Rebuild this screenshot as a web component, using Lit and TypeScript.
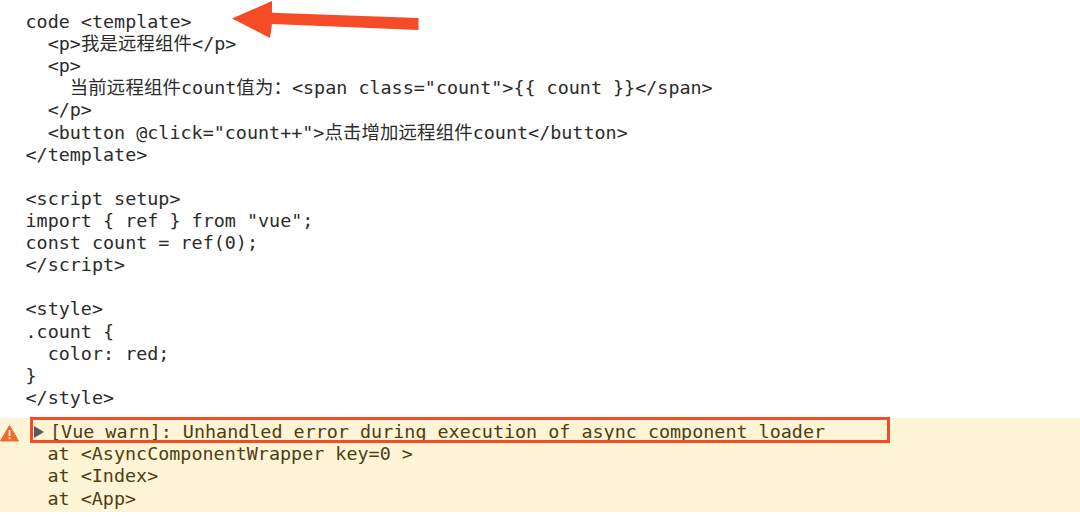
import { LitElement, html, css } from "lit";
import { customElement } from "lit/decorators.js";

const code = `code <template>
  <p>我是远程组件</p>
  <p>
    当前远程组件count值为：<span class="count">{{ count }}</span>
  </p>
  <button @click="count++">点击增加远程组件count</button>
</template>

<script setup>
import { ref } from "vue";
const count = ref(0);
</script>

<style>
.count {
  color: red;
}
</style>`;

const lines = code.split("\n").map((l) => l.split(/([\u4e00-\u9fff：]+)/));

@customElement("app-root")
export class AppRoot extends LitElement {
  static styles = css`
    :host {
      display: block;
      position: relative;
      width: 1080px;
      height: 518px;
      background: #fff;
      overflow: hidden;
      font-family: "DejaVu Sans Mono", "Noto Sans CJK SC", monospace;
      font-size: 18.4px;
      line-height: 22.12px;
      color: #2b2b2b;
    }
    .code {
      padding: 11px 0 0 25.5px;
      height: 418px;
      box-sizing: border-box;
    }
    .line {
      height: 22.12px;
      white-space: pre;
    }
    .cjk {
      letter-spacing: 0.14px;
    }
    .warn {
      position: relative;
      height: 94px;
      background: #fef4d6;
      color: #4e3d12;
      padding-top: 3px;
      box-sizing: border-box;
    }
    .row {
      display: flex;
      align-items: center;
      height: 22.2px;
      white-space: pre;
    }
    .first {
      padding-left: 34px;
      gap: 6px;
    }
    .at {
      padding-left: 47.5px;
    }
    .tri {
      width: 0;
      height: 0;
      border-left: 10px solid #5a5a5a;
      border-top: 6px solid transparent;
      border-bottom: 6px solid transparent;
    }
    .icon {
      position: absolute;
      left: 0;
      top: 6px;
    }
    .box {
      position: absolute;
      left: 30px;
      top: -1px;
      width: 860px;
      height: 26px;
      box-sizing: border-box;
      border: 3px solid #f54b27;
    }
    .arrow {
      position: absolute;
      left: 230px;
      top: 0;
    }
  `;

  render() {
    return html`
      <div class="code">
        ${lines.map(
          (parts) =>
            html`<div class="line">${parts.map((p, i) => (i % 2 ? html`<span class="cjk">${p}</span>` : p))}</div>`
        )}
      </div>
      <div class="warn">
        <svg class="icon" width="20" height="18" viewBox="0 0 20 18">
          <path d="M9.5 1.5 L18.5 17 H0.5 Z" fill="#f0692f" stroke="#f0692f" stroke-linejoin="round" />
          <rect x="8.6" y="6" width="1.9" height="6" fill="#fef4d6" />
          <rect x="8.6" y="13.2" width="1.9" height="2" fill="#fef4d6" />
        </svg>
        <div class="row first"><span class="tri"></span><span>[Vue warn]: Unhandled error during execution of async component loader</span></div>
        <div class="row at">at &lt;AsyncComponentWrapper key=0 &gt;</div>
        <div class="row at">at &lt;Index&gt;</div>
        <div class="row at">at &lt;App&gt;</div>
        <div class="box"></div>
      </div>
      <svg class="arrow" width="192" height="40" viewBox="0 0 192 40">
        <path d="M2 18.5 L42 1 L42 12.7 L188.5 18 L188.5 30 L42 24 L40 38 Z" fill="#f54b27" />
      </svg>
    `;
  }
}
